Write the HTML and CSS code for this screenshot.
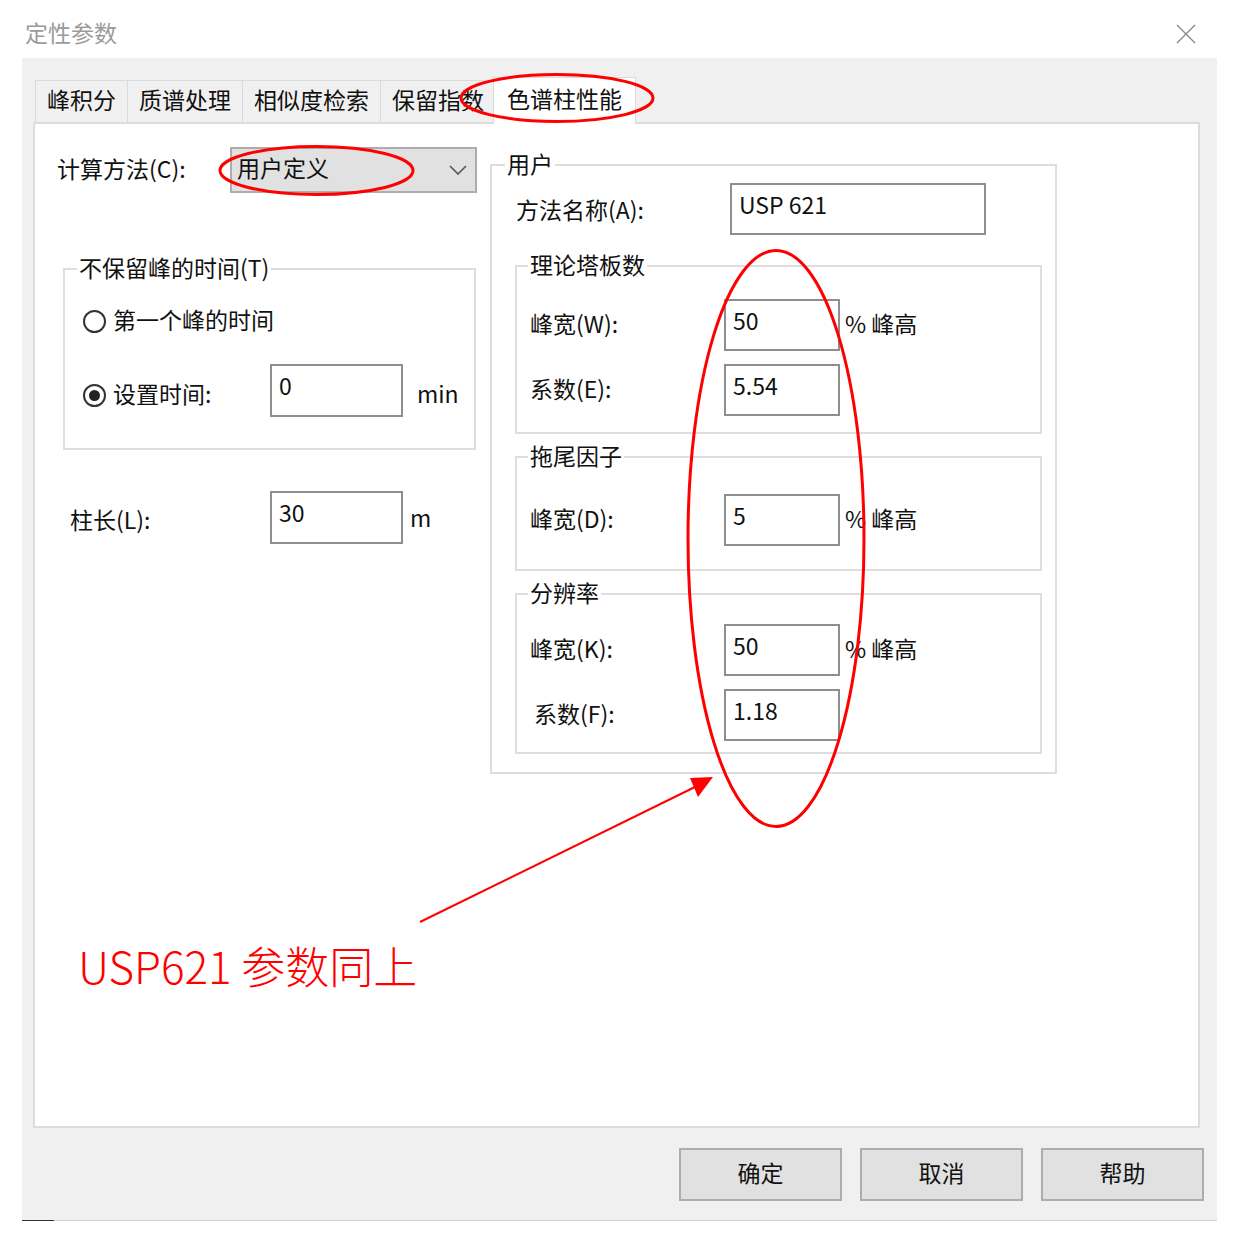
FILE: index.html
```html
<!DOCTYPE html>
<html lang="zh-CN">
<head>
<meta charset="utf-8">
<title>定性参数</title>
<link rel="stylesheet" href="styles.css">
</head>
<body>
<div class="window">
  <header class="titlebar">
    <span class="title">定性参数</span>
    <svg class="close" width="20" height="20" viewBox="0 0 20 20"><path d="M1 1 L19 19 M19 1 L1 19" stroke="#8a8a8a" stroke-width="1.4" fill="none"/></svg>
  </header>

  <div class="dialog">
    <div class="tabs">
      <div class="tab">峰积分</div>
      <div class="tab">质谱处理</div>
      <div class="tab">相似度检索</div>
      <div class="tab">保留指数</div>
      <div class="tab active">色谱柱性能</div>
    </div>

    <div class="panel">
      <div class="col-left">
        <div class="row row-method">
          <span class="lbl lbl-method">计算方法(C):</span>
          <div class="combo">
            <span>用户定义</span>
            <svg class="chev" width="18" height="10" viewBox="0 0 18 10"><path d="M1 1 L9 9 L17 1" stroke="#555" stroke-width="1.6" fill="none"/></svg>
          </div>
        </div>

        <fieldset class="group group-time">
          <legend>不保留峰的时间(T)</legend>
          <div class="row row-radio1">
            <span class="radio"></span><span class="radio-lbl">第一个峰的时间</span>
          </div>
          <div class="row row-time">
            <span class="radio-wrap"><span class="radio checked"></span><span class="radio-lbl">设置时间:</span></span>
            <div class="field field-sm">0</div>
            <span class="unit unit-min">min</span>
          </div>
        </fieldset>

        <div class="row row-len">
          <span class="lbl lbl-len">柱长(L):</span>
          <div class="field field-sm">30</div>
          <span class="unit unit-m">m</span>
        </div>
      </div>

      <fieldset class="group group-user">
        <legend>用户</legend>
        <div class="row row-name">
          <span class="lbl lbl-name">方法名称(A):</span>
          <div class="field field-name">USP 621</div>
        </div>

        <fieldset class="group sub sub-plates">
          <legend>理论塔板数</legend>
          <div class="row">
            <span class="lbl lbl-sub">峰宽(W):</span>
            <div class="field field-xs">50</div>
            <span class="unit unit-pct">% 峰高</span>
          </div>
          <div class="row row-gap">
            <span class="lbl lbl-sub">系数(E):</span>
            <div class="field field-xs">5.54</div>
          </div>
        </fieldset>

        <fieldset class="group sub sub-tail">
          <legend>拖尾因子</legend>
          <div class="row">
            <span class="lbl lbl-sub">峰宽(D):</span>
            <div class="field field-xs">5</div>
            <span class="unit unit-pct">% 峰高</span>
          </div>
        </fieldset>

        <fieldset class="group sub sub-res">
          <legend>分辨率</legend>
          <div class="row">
            <span class="lbl lbl-sub">峰宽(K):</span>
            <div class="field field-xs">50</div>
            <span class="unit unit-pct">% 峰高</span>
          </div>
          <div class="row row-gap">
            <span class="lbl lbl-sub lbl-indent">系数(F):</span>
            <div class="field field-xs">1.18</div>
          </div>
        </fieldset>
      </fieldset>
    </div>

    <div class="buttons">
      <button class="btn">确定</button>
      <button class="btn">取消</button>
      <button class="btn">帮助</button>
    </div>
  </div>

  <svg class="annot" width="1240" height="1236" viewBox="0 0 1240 1236">
    <g fill="none" stroke="#ff0000" stroke-width="3">
      <ellipse cx="557" cy="98" rx="96" ry="23.5"/>
      <ellipse cx="316.5" cy="170.5" rx="96.5" ry="24"/>
      <ellipse cx="776" cy="538.5" rx="88" ry="288"/>
    </g>
    <line x1="420" y1="922" x2="697" y2="786" stroke="#ff0000" stroke-width="2"/>
    <polygon points="690,778 713,777 698,797" fill="#ff0000"/>
  </svg>
  <div class="annot-text">USP621 参数同上</div>
</div>
</body>
</html>
```

FILE: styles.css
```css
* { box-sizing: border-box; }

html, body {
  margin: 0;
  padding: 0;
  background: #ffffff;
}

body {
  font-family: "Noto Sans CJK SC", "Noto Sans", sans-serif;
  font-size: 23px;
  color: #111111;
}

.window {
  position: relative;
  width: 1240px;
  height: 1236px;
}

/* title bar */
.titlebar {
  height: 58px;
  display: flex;
  justify-content: space-between;
  align-items: flex-start;
  padding: 18px 44px 0 25px;
}
.title {
  color: #9b9b9b;
  font-size: 23px;
  line-height: 28px;
}
.close {
  margin-top: 6px;
}

/* dialog body */
.dialog {
  position: relative;
  margin-left: 22px;
  width: 1195px;
  background: #f0f0f0;
  padding: 19px 0 19px 0;
  border-bottom: 1px solid #cfcfcf;
}
.dialog::after {
  content: "";
  position: absolute;
  left: 0;
  bottom: -1px;
  width: 32px;
  height: 1px;
  background: #333;
}

/* tabs */
.tabs {
  display: flex;
  align-items: flex-start;
  height: 45px;
  margin-left: 13px;
  position: relative;
  z-index: 1;
}
.tab {
  height: 42px;
  margin-top: 3px;
  padding: 0 11px;
  line-height: 37px;
  font-size: 23px;
  color: #111111;
  border: 1px solid #dadada;
  border-bottom: none;
  border-right: none;
  background: #f0f0f0;
  white-space: nowrap;
}
.tab.active {
  height: 47px;
  margin-top: 0;
  margin-left: -2px;
  padding: 0 13px;
  line-height: 40px;
  background: #ffffff;
  border-right: 1px solid #dadada;
  position: relative;
}

.panel {
  display: flex;
  align-items: flex-start;
  margin-left: 11px;
  width: 1167px;
  height: 1006px;
  background: #ffffff;
  border: 2px solid #dcdcdc;
  padding-left: 22px;
}

/* generic rows */
.row {
  display: flex;
  align-items: center;
}
.lbl {
  flex: none;
  white-space: nowrap;
  padding-bottom: 4px;
}

/* left column */
.col-left {
  width: 420px;
  flex: none;
}
.row-method {
  margin-top: 23px;
}
.lbl-method {
  width: 173px;
}
.combo {
  width: 247px;
  height: 46px;
  background: #e1e1e1;
  border: 2px solid #adadad;
  display: flex;
  align-items: center;
  justify-content: space-between;
  padding: 0 8px 6px 5px;
}
.chev {
  margin-top: 6px;
}

/* group boxes */
.group {
  margin: 0;
  border: 2px solid #dedede;
  min-inline-size: 0;
}
.group > legend {
  padding: 0 2px 3px;
  line-height: 24px;
  font-size: 23px;
  white-space: nowrap;
}

.group-time {
  margin-top: 62px;
  margin-left: 6px;
  width: 413px;
  padding: 19px 10px 31px 18px;
}
.group-time > legend {
  margin-left: -6px;
}
.row-radio1 {
  height: 40px;
}
.row-radio1 .radio-lbl {
  padding-bottom: 4px;
}
.row-time {
  margin-top: 23px;
}
.radio-wrap {
  display: flex;
  align-items: center;
  width: 187px;
  margin-top: 9px;
}
.radio-wrap .radio-lbl {
  padding-bottom: 4px;
}
.radio {
  flex: none;
  width: 23px;
  height: 23px;
  border-radius: 50%;
  border: 2px solid #333333;
  background: #ffffff;
  position: relative;
}
.radio.checked::after {
  content: "";
  position: absolute;
  left: 4px;
  top: 4px;
  width: 11px;
  height: 11px;
  border-radius: 50%;
  background: #222222;
}
.radio-lbl {
  margin-left: 7px;
  white-space: nowrap;
}

/* text fields */
.field {
  flex: none;
  height: 52px;
  background: #ffffff;
  border: 2px solid #8e8e8e;
  padding: 0 6px 11px 7px;
  display: flex;
  align-items: center;
  white-space: nowrap;
}
.field-sm {
  width: 133px;
  height: 53px;
}
.field-xs {
  width: 116px;
}
.field-name {
  width: 256px;
}

.unit {
  white-space: nowrap;
  padding-bottom: 4px;
}
.unit-min {
  margin-left: 14px;
  margin-top: 9px;
}
.row-len {
  margin-top: 41px;
}
.lbl-len {
  width: 213px;
  padding-left: 13px;
  margin-top: 6px;
}
.unit-m {
  margin-left: 7px;
  margin-top: 2px;
}

/* right group */
.group-user {
  flex: none;
  margin-top: 27px;
  margin-left: 13px;
  width: 567px;
  padding: 5px 13px 18px 23px;
}
.group-user > legend {
  margin-left: -10px;
}
.lbl-name {
  width: 215px;
  padding-left: 1px;
  margin-top: 4px;
}

.sub {
  width: 527px;
  padding-left: 13px;
  padding-right: 10px;
}
.sub > legend {
  margin-left: -2px;
}
.sub-plates {
  margin-top: 17px;
  padding-top: 20px;
  padding-bottom: 16px;
}
.sub-tail {
  margin-top: 9px;
  padding-top: 24px;
  padding-bottom: 23px;
}
.sub-res {
  margin-top: 9px;
  padding-top: 17px;
  padding-bottom: 11px;
}
.row-gap {
  margin-top: 13px;
}
.lbl-sub {
  width: 194px;
}
.lbl-indent {
  padding-left: 4px;
}
.unit-pct {
  margin-left: 5px;
}

/* buttons */
.buttons {
  display: flex;
  justify-content: flex-end;
  gap: 18px;
  margin-top: 20px;
  padding-right: 13px;
}
.btn {
  width: 163px;
  height: 53px;
  background: #e1e1e1;
  border: 2px solid #adadad;
  font-family: "Noto Sans CJK SC", "Noto Sans", sans-serif;
  font-size: 23px;
  color: #111111;
  padding: 0 0 5px 0;
}

/* red annotations overlay */
.annot {
  position: absolute;
  left: 0;
  top: 0;
  z-index: 5;
  pointer-events: none;
}
.annot-text {
  position: absolute;
  left: 78px;
  top: 943px;
  font-size: 44px;
  line-height: 1;
  font-weight: 300;
  color: #ff0000;
  white-space: nowrap;
}
```
